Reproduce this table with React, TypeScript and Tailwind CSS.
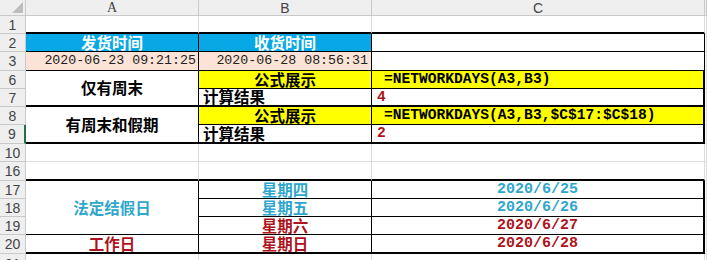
import React from "react";

const CJK = "font-['Noto_Sans_CJK_SC','Noto_Sans',sans-serif]";
const MONO = "font-['Liberation_Mono','Noto_Sans_CJK_SC',monospace]";

function Head({ children, className = "" }: { children?: React.ReactNode; className?: string }) {
  return (
    <div
      className={`flex items-center justify-center leading-none border-r border-b border-[#c9c9c9] bg-[#efefef] text-[14px] text-[#444] font-['Liberation_Sans',sans-serif] ${className}`}
    >
      {children}
    </div>
  );
}

function Cell({ children, className = "" }: { children?: React.ReactNode; className?: string }) {
  return <div className={`flex items-center overflow-hidden whitespace-nowrap leading-none ${className}`}>{children}</div>;
}

const grid = "border-r border-b border-[#dcdcdc]";

export default function App() {
  return (
    <div className="h-[260px] w-[707px] overflow-hidden bg-white">
      <div className="grid grid-cols-[26px_173px_173px_333px_1fr] grid-rows-[16px_18px_18px_19px_18px_18px_18px_19px_18px_19px_18px_18px_18px_19px_20px]">
        {/* column header */}
        <Head className="relative">
          <svg className="absolute right-[2px] bottom-[2px]" width="11" height="11" viewBox="0 0 11 11">
            <polygon points="11,0 11,11 0,11" fill="#bdbdbd" />
          </svg>
        </Head>
        <Head className="font-['Liberation_Serif',serif]">A</Head>
        <Head>B</Head>
        <Head>C</Head>
        <Head />

        {/* row 1 */}
        <Head>1</Head>
        <Cell className="border-r border-r-[#dcdcdc] border-b-2 border-b-black" />
        <Cell className="border-r border-r-[#dcdcdc] border-b-2 border-b-black" />
        <Cell className="border-r border-r-[#dcdcdc] border-b-2 border-b-black" />
        <Cell className={grid} />

        {/* row 2 */}
        <Head>2</Head>
        <Cell className={`justify-center border-r border-b border-black bg-[#08a8e6] text-[15.5px] font-bold text-white ${CJK}`}>发货时间</Cell>
        <Cell className={`justify-center border-r border-b border-black bg-[#08a8e6] text-[15.5px] font-bold text-white ${CJK}`}>收货时间</Cell>
        <Cell className="border-r border-b border-black" />
        <Cell className={grid} />

        {/* row 3 */}
        <Head>3</Head>
        <Cell className={`justify-end pr-[2px] border-r border-b border-black bg-[#fbe4d7] text-[13.3px] text-[#222] ${MONO}`}>2020-06-23 09:21:25</Cell>
        <Cell className={`justify-end pr-[3px] border-r border-b border-black bg-[#fbe4d7] text-[13.3px] text-[#222] ${MONO}`}>2020-06-28 08:56:31</Cell>
        <Cell className="border-r border-b border-black" />
        <Cell className={grid} />

        {/* rows 6-7 */}
        <Head>6</Head>
        <Cell className={`row-span-2 justify-center border-r border-r-black border-b-2 border-b-black text-[15.5px] font-bold text-black ${CJK}`}>仅有周末</Cell>
        <Cell className={`justify-center border-r border-b border-black bg-[#ffff00] text-[15.5px] font-bold text-black ${CJK}`}>公式展示</Cell>
        <Cell className={`pl-[12px] border-r-2 border-b border-black bg-[#ffff00] text-[14.6px] font-bold text-black ${MONO}`}>=NETWORKDAYS(A3,B3)</Cell>
        <Cell className={grid} />

        <Head>7</Head>
        <Cell className={`pl-[4px] border-r border-r-black border-b-2 border-b-black text-[15.5px] font-bold text-black ${CJK}`}>计算结果</Cell>
        <Cell className={`pl-[5px] border-r-2 border-b-2 border-black text-[14.6px] font-bold text-[#b0121b] ${MONO}`}>4</Cell>
        <Cell className={grid} />

        {/* rows 8-9 */}
        <Head>8</Head>
        <Cell className={`row-span-2 justify-center border-r border-r-black border-b-2 border-b-black text-[15.5px] font-bold text-black ${CJK}`}>有周末和假期</Cell>
        <Cell className={`justify-center border-r border-b border-black bg-[#ffff00] text-[15.5px] font-bold text-black ${CJK}`}>公式展示</Cell>
        <Cell className={`pl-[12px] border-r-2 border-b border-black bg-[#ffff00] text-[14.6px] font-bold text-black ${MONO}`}>=NETWORKDAYS(A3,B3,$C$17:$C$18)</Cell>
        <Cell className={grid} />

        <Head className="border-r-2 border-r-[#217346] bg-[#d4d4d4] text-[#333]">9</Head>
        <Cell className={`pl-[4px] border-r border-r-black border-b-2 border-b-black text-[15.5px] font-bold text-black ${CJK}`}>计算结果</Cell>
        <Cell className={`pl-[5px] border-r-2 border-b-2 border-black text-[14.6px] font-bold text-[#b0121b] ${MONO}`}>2</Cell>
        <Cell className={grid} />

        {/* row 10 */}
        <Head>10</Head>
        <Cell className={grid} />
        <Cell className={grid} />
        <Cell className={grid} />
        <Cell className={grid} />

        {/* row 16 */}
        <Head>16</Head>
        <Cell className="border-r border-r-[#dcdcdc] border-b-2 border-b-black" />
        <Cell className="border-r border-r-[#dcdcdc] border-b-2 border-b-black" />
        <Cell className="border-r border-r-[#dcdcdc] border-b-2 border-b-black" />
        <Cell className={grid} />

        {/* rows 17-20 */}
        <Head>17</Head>
        <Cell className={`row-span-3 justify-center border-r border-b border-black text-[15.5px] font-bold text-[#2fa6cc] ${CJK}`}>法定结假日</Cell>
        <Cell className={`justify-center border-r border-b border-black text-[15.5px] font-bold text-[#2fa6cc] ${CJK}`}>星期四</Cell>
        <Cell className={`justify-center border-r-2 border-b border-black text-[15px] font-bold text-[#2fa6cc] ${MONO}`}>2020/6/25</Cell>
        <Cell className={grid} />

        <Head>18</Head>
        <Cell className={`justify-center border-r border-b border-black text-[15.5px] font-bold text-[#2fa6cc] ${CJK}`}>星期五</Cell>
        <Cell className={`justify-center border-r-2 border-b border-black text-[15px] font-bold text-[#2fa6cc] ${MONO}`}>2020/6/26</Cell>
        <Cell className={grid} />

        <Head>19</Head>
        <Cell className={`justify-center border-r border-b border-black text-[15.5px] font-bold text-[#ad1420] ${CJK}`}>星期六</Cell>
        <Cell className={`justify-center border-r-2 border-b border-black text-[15px] font-bold text-[#ad1420] ${MONO}`}>2020/6/27</Cell>
        <Cell className={grid} />

        <Head>20</Head>
        <Cell className={`justify-center border-r border-r-black border-b-2 border-b-black text-[15.5px] font-bold text-[#ad1420] ${CJK}`}>工作日</Cell>
        <Cell className={`justify-center border-r border-r-black border-b-2 border-b-black text-[15.5px] font-bold text-[#ad1420] ${CJK}`}>星期日</Cell>
        <Cell className={`justify-center border-r-2 border-b-2 border-black text-[15px] font-bold text-[#ad1420] ${MONO}`}>2020/6/28</Cell>
        <Cell className={grid} />

        {/* row 21 (cut off) */}
        <Head>21</Head>
        <Cell className={grid} />
        <Cell className={grid} />
        <Cell className={grid} />
        <Cell className={grid} />
      </div>
    </div>
  );
}
